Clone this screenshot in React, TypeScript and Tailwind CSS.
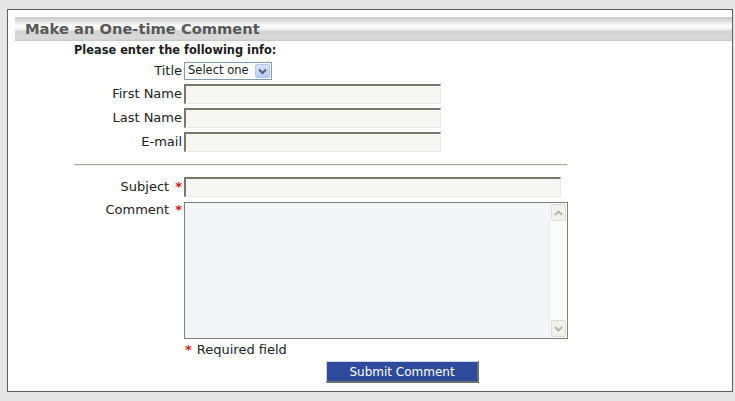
const font = { fontFamily: "'DejaVu Sans', Verdana, sans-serif" }

function TextBox({ width, height }: { width: number; height: number }) {
  return (
    <div
      className="border-t-2 border-l-2 border-b border-r border-t-[#7a7766] border-l-[#7a7766] border-b-[#ecebe3] border-r-[#ecebe3] bg-[#f6f6f5]"
      style={{ width, height }}
    />
  )
}

function Chevron({ up }: { up?: boolean }) {
  return (
    <svg width="9" height="6" viewBox="0 0 9 6" className="block">
      <path
        d={up ? "M1 5 L4.5 1.5 L8 5" : "M1 1 L4.5 4.5 L8 1"}
        fill="none"
        stroke="#a9a9a3"
        strokeWidth="1.6"
      />
    </svg>
  )
}

function Label({ text, required }: { text: string; required?: boolean }) {
  return (
    <div className="pr-[2px] text-right text-[13px] leading-[16px] text-[#222]">
      {text}
      {required && <span className="ml-[6px] font-bold text-[#e01010]">*</span>}
    </div>
  )
}

export default function App() {
  return (
    <div className="h-[401px] w-[735px] overflow-hidden bg-[#e6e6e6] pt-[9px] pl-[7px]" style={font}>
      <div className="h-[383px] w-[726px] border border-[#5e5e5e] bg-white pt-[7px] pl-[7px]">
        <div className="flex h-[24px] items-center bg-[linear-gradient(to_bottom,#c9c9c9_0%,#dcdcdc_15%,#fbfbfb_35%,#f4f4f4_50%,#d3d3d3_60%,#d9d9d9_90%,#c4c4c4_100%)] pl-[10px]">
          <span className="text-[14.7px] font-bold leading-none text-[#585858]">Make an One-time Comment</span>
        </div>

        <div className="ml-[59px]">
          <div className="mt-[3px] h-[13px] text-[11.4px] font-bold leading-[13px] text-[#1c1c1c]">
            Please enter the following info:
          </div>

          <div className="mt-[5px] grid grid-cols-[110px_auto] items-center">
            <Label text="Title" />
            <div className="flex h-[18px] w-[88px] items-center justify-between border border-[#7f9db9] bg-white pl-[3px] pr-[1px]">
              <span className="text-[11.5px] leading-none text-[#222]">Select one</span>
              <span className="flex h-[14px] w-[15px] items-center justify-center rounded-[2px] border border-[#b3c6ef] bg-[linear-gradient(to_bottom,#d8e3fc,#b9cbf6)]">
                <svg width="9" height="7" viewBox="0 0 9 7">
                  <path d="M1 1.5 L4.5 5 L8 1.5" fill="none" stroke="#4d6185" strokeWidth="2" />
                </svg>
              </span>
            </div>
          </div>

          <div className="mt-[4px] grid grid-cols-[110px_auto] items-center">
            <Label text="First Name" />
            <TextBox width={257} height={20} />
          </div>
          <div className="mt-[4px] grid grid-cols-[110px_auto] items-center">
            <Label text="Last Name" />
            <TextBox width={257} height={20} />
          </div>
          <div className="mt-[4px] grid grid-cols-[110px_auto] items-center">
            <Label text="E-mail" />
            <TextBox width={257} height={20} />
          </div>

          <div className="mt-[12px] h-[2px] w-[493px] border-t border-t-[#aca899] border-b border-b-[#f1efe6]" />

          <div className="mt-[11px] grid grid-cols-[110px_auto] items-center">
            <Label text="Subject" required />
            <TextBox width={377} height={20} />
          </div>

          <div className="mt-[5px] grid grid-cols-[110px_auto] items-start">
            <Label text="Comment" required />
            <div className="flex h-[137px] w-[384px] border border-[#7f7f7f] bg-[#f4f5f7]">
              <div className="flex-1" />
              <div className="flex w-[18px] flex-col justify-between border-l border-[#eeeeea] bg-[#fbfbfa] p-[1px]">
                <div className="flex h-[17px] items-center justify-center rounded-[2px] border border-[#dcdcd5] bg-[#f1f1ec]">
                  <Chevron up />
                </div>
                <div className="flex h-[17px] items-center justify-center rounded-[2px] border border-[#dcdcd5] bg-[#f1f1ec]">
                  <Chevron />
                </div>
              </div>
            </div>
          </div>

          <div className="mt-[3px] grid grid-cols-[110px_auto] items-center">
            <div />
            <div className="pl-[1px] text-[13px] leading-[16px] text-[#222]">
              <span className="mr-[5px] font-bold text-[#e01010]">*</span>Required field
            </div>
          </div>

          <button className="ml-[252px] mt-[3px] flex h-[22px] w-[153px] items-center justify-center border-t border-l border-b-2 border-r-2 border-t-[#d0d4e8] border-l-[#d0d4e8] border-b-[#6f6f6f] border-r-[#6f6f6f] bg-[#2d4a9b] text-[12px] leading-none text-white">
            Submit Comment
          </button>
        </div>
      </div>
    </div>
  )
}
